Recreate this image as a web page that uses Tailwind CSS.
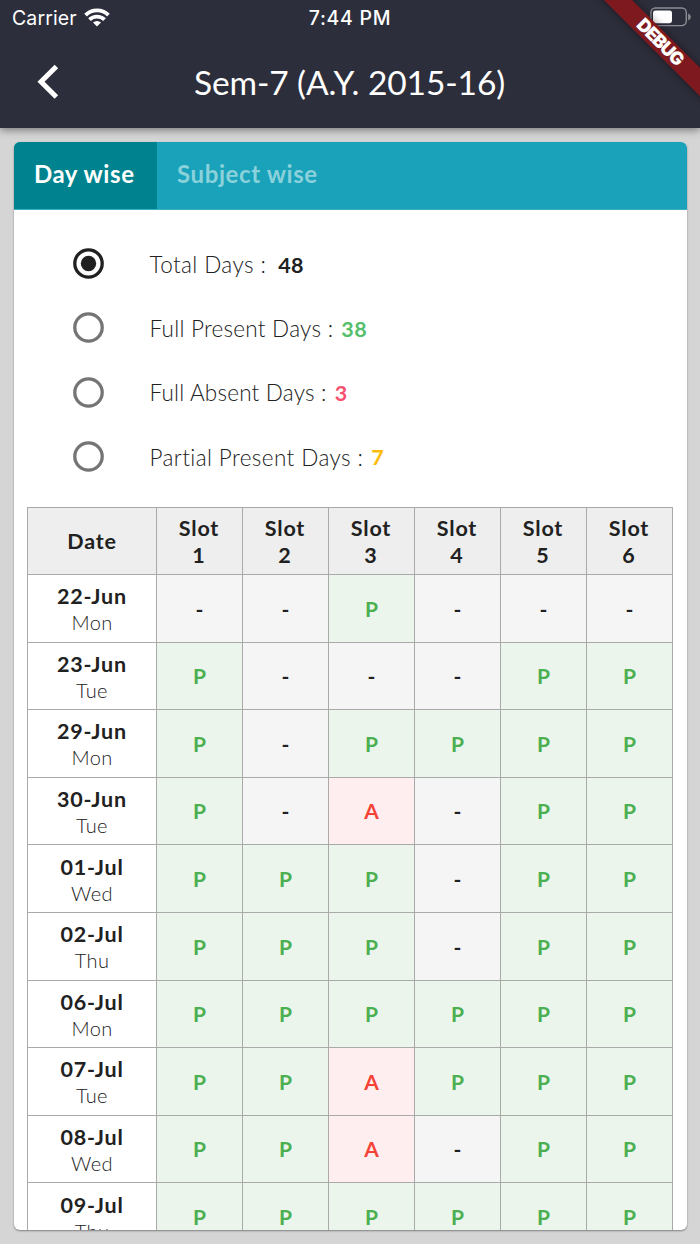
<!DOCTYPE html>
<html lang="en">
<head>
    <meta charset="UTF-8">
    <meta name="viewport" content="width=device-width, initial-scale=1.0">
    <title>Attendance</title>
    <script src="https://cdn.jsdelivr.net/npm/@tailwindcss/browser@4"></script>
</head>
<body class="bg-[#d5d5d5] font-['Lato',sans-serif] text-[#212121]">
    <div class="relative w-[700px] h-[1244px] overflow-hidden flex flex-col">
        <!-- Status bar + app bar -->
        <header class="h-32 shrink-0 bg-[#2d2e3b] text-white shadow-[0_2px_8px_rgba(0,0,0,0.45)]">
            <div class="h-9 px-3 grid grid-cols-3 items-center font-['Inter',sans-serif]">
                <div class="flex items-center gap-2">
                    <span class="text-[19.5px] leading-9 tracking-[0.1px]">Carrier</span>
                    <svg class="w-[26px] h-[19px] -mt-0.5 -ml-px" viewBox="0 0 26 19" fill="none" stroke="#fff" stroke-width="3.8">
                        <path d="M1.6 7.1a16.2 16.2 0 0 1 22.8 0"/>
                        <path d="M5.5 11.7a10.8 10.8 0 0 1 15 0"/>
                        <path d="M13 18.6l-4-4a5.8 5.8 0 0 1 8 0z" fill="#fff" stroke="none"/>
                    </svg>
                </div>
                <span class="text-center text-[19.5px] font-medium tracking-[0.7px] pt-px">7:44 PM</span>
                <svg class="w-[41px] h-[20px] justify-self-end -mt-0.5 -mr-[3px]" viewBox="0 0 41 20">
                    <rect x="0.9" y="1" width="35.4" height="17.6" rx="4.5" fill="none" stroke="#8d8d94" stroke-width="1.4"/>
                    <rect x="3" y="3.4" width="19" height="12.8" rx="2.4" fill="#fff"/>
                    <path d="M38.2 6.6q2.6 1 2.6 3.4t-2.6 3.4z" fill="#8d8d94"/>
                </svg>
            </div>
            <div class="h-[92px] grid grid-cols-[96px_1fr_96px] items-center">
                <svg class="w-6 h-9 ml-9" viewBox="0 0 24 36" fill="none" stroke="#fff" stroke-width="5">
                    <path d="M20.4 2.5L5 17.7l15.4 15.3"/>
                </svg>
                <h1 class="text-center text-[33.5px] tracking-[-0.1px] pr-px">Sem-7 (A.Y. 2015-16)</h1>
            </div>
        </header>

        <!-- Card -->
        <main class="mx-[13.5px] mt-[14px] h-[1088px] rounded-md bg-white shadow-[0_1px_2px_rgba(0,0,0,0.4)] overflow-hidden">
            <nav class="h-[67.5px] flex bg-[#19a2b9] text-[24px] font-bold border-b border-[#3bb0c4]">
                <div class="w-[143.5px] bg-[#00838f] text-white flex items-center justify-center pb-0.5 pr-0.5">
                    <span class="tracking-[0.6px]">Day wise</span>
                </div>
                <div class="pl-5 text-[#8ad1dc] flex items-center pb-0.5">
                    <span class="tracking-[0.6px]">Subject wise</span>
                </div>
            </nav>

            <div id="filters" class="pt-[22px] h-[297.5px] pl-[59px]"></div>

            <div id="attendance" class="mx-[13.5px] border-t border-l border-[#aaaaaa]"></div>
        </main>

        <!-- Debug ribbon -->
        <div class="absolute left-[519px] top-[30.5px] w-[280px] h-5 rotate-45 bg-[#7e1a1f] shadow-[0_0_8px_rgba(0,0,0,0.45)] text-white text-center text-[18px] leading-5 font-black tracking-[-1.1px] pl-[3px] font-['Inter',sans-serif]">DEBUG</div>
    </div>

    <script>
        const filters = [
            { label: 'Total Days :', value: '48', gap: 'ml-3', color: 'text-[#212121]', spacing: 'tracking-[0.4px]', checked: true },
            { label: 'Full Present Days :', value: '38', gap: 'ml-2', color: 'text-[#55bf6d]', spacing: 'tracking-[0.25px]' },
            { label: 'Full Absent Days :', value: '3', gap: 'ml-2', color: 'text-[#f9506f]', spacing: 'tracking-[0.2px]' },
            { label: 'Partial Present Days :', value: '7', gap: 'ml-2', color: 'text-[#fcbc0b]', spacing: 'tracking-[0.4px]' }
        ];

        // One letter per slot: P present, A absent, - no lecture
        const days = [
            ['22-Jun', 'Mon', '--P---'],
            ['23-Jun', 'Tue', 'P---PP'],
            ['29-Jun', 'Mon', 'P-PPPP'],
            ['30-Jun', 'Tue', 'P-A-PP'],
            ['01-Jul', 'Wed', 'PPP-PP'],
            ['02-Jul', 'Thu', 'PPP-PP'],
            ['06-Jul', 'Mon', 'PPPPPP'],
            ['07-Jul', 'Tue', 'PPAPPP'],
            ['08-Jul', 'Wed', 'PPA-PP'],
            ['09-Jul', 'Thu', 'PPPPPP']
        ];

        const slotStyle = {
            'P': 'bg-[#ebf5eb] text-[#4caf50]',
            'A': 'bg-[#ffeeef] text-[#f44336]',
            '-': 'bg-[#f5f5f5] text-[#212121]'
        };

        document.getElementById('filters').innerHTML = filters.map(f => `
            <div class="h-[64.3px] flex items-center">
                <svg class="w-[31px] h-[31px] shrink-0" viewBox="0 0 31 31" fill="none" stroke-width="3.3" stroke="${f.checked ? '#212121' : '#757575'}">
                    <circle cx="15.5" cy="15.5" r="13.7"/>
                    ${f.checked ? '<circle cx="15.5" cy="15.5" r="7.7" fill="#212121" stroke="none"/>' : ''}
                </svg>
                <span class="ml-[46px] mt-0.5 text-[22.5px] font-light ${f.spacing}">${f.label}</span>
                <span class="${f.gap} mt-0.5 text-[21.5px] font-bold tracking-[0.4px] ${f.color}">${f.value}</span>
            </div>
        `).join('');

        // Header row and one row for each day
        const cell = 'border-r border-b border-[#aaaaaa] flex flex-col items-center justify-center';
        const row = 'grid grid-cols-[129px_repeat(6,1fr)]';
        document.getElementById('attendance').innerHTML = `
            <div class="${row} h-[67px] bg-[#eeeeee] text-[21.5px] leading-[27px] font-bold tracking-[0.8px]">
                <div class="${cell}">Date</div>
                ${[1, 2, 3, 4, 5, 6].map(n => `<div class="${cell} pr-px pt-0.5"><span>Slot</span><span>${n}</span></div>`).join('')}
            </div>
        ` + days.map(([date, day, slots]) => `
            <div class="${row} h-[67.6px]">
                <div class="${cell} leading-[26px] pt-0.5">
                    <span class="text-[21.5px] font-bold tracking-[0.8px]">${date}</span>
                    <span class="text-[20px] font-light tracking-[0.4px]">${day}</span>
                </div>
                ${[...slots].map(s => `<div class="${cell} ${slotStyle[s]} text-[21px] font-bold">${s}</div>`).join('')}
            </div>
        `).join('');
    </script>
</body>
</html>
